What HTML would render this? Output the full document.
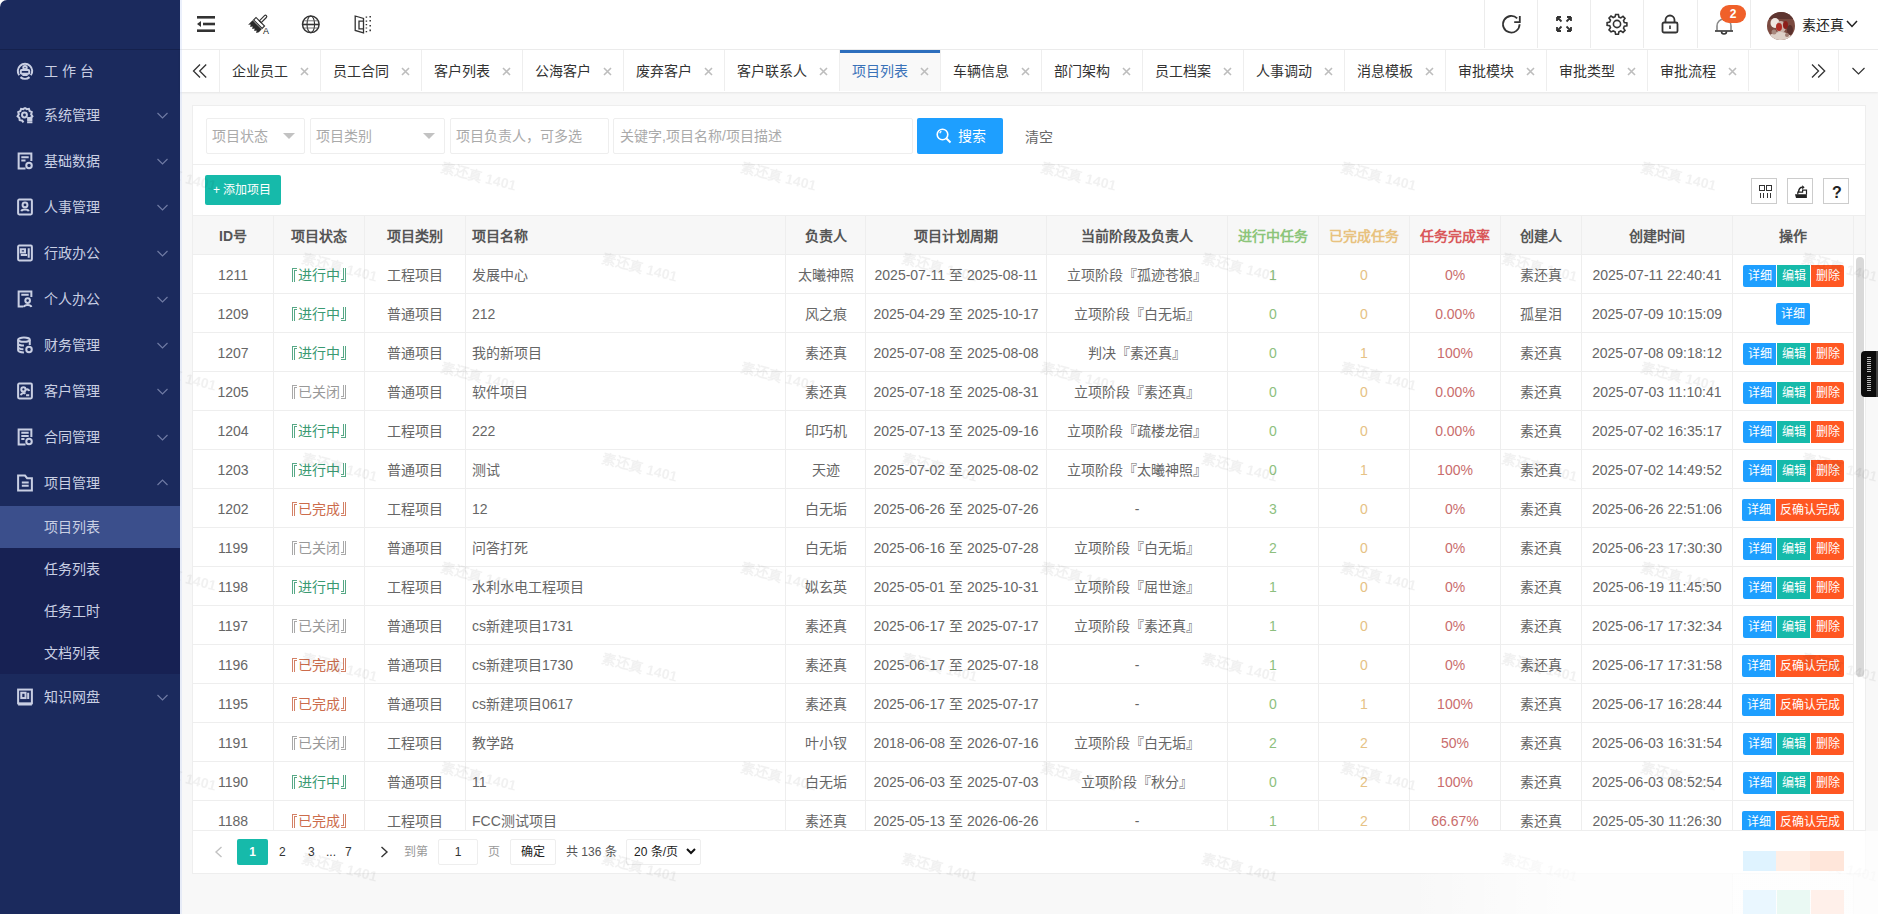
<!DOCTYPE html><html lang="zh-CN"><head><meta charset="utf-8"><style>
*{box-sizing:border-box;margin:0;padding:0}
html,body{width:1878px;height:914px;overflow:hidden}
body{position:relative;font-family:"Liberation Sans",sans-serif;font-size:14px;color:#333;background:#f8f8f8}
.a{position:absolute}
.nw{white-space:nowrap}
.side{left:0;top:0;width:180px;height:914px;background:#1b2a5d}
.mi{position:absolute;left:0;width:180px;color:#c9cfe3;font-size:14px;white-space:nowrap}
.mi .t{position:absolute;left:44px;top:0;line-height:inherit}
.mi svg{position:absolute}
.hdr{left:180px;top:0;width:1698px;height:50px;background:#fff;border-bottom:1px solid #ececec}
.tabs{left:180px;top:50px;width:1698px;height:42px;background:#fff;box-shadow:0 1px 2px rgba(0,0,0,.08)}
.tab{position:absolute;top:0;height:41px;border-right:1px solid #eee;color:#333;font-size:14px;line-height:43px;white-space:nowrap}
.tab .x{position:absolute;top:0;color:#aaa}
.card{left:192px;top:105px;width:1674px;height:769px;background:#fff;border:1px solid #eee}
.cell{position:absolute;text-align:center;white-space:nowrap;color:#666;font-size:14px;overflow:hidden}
.vl{position:absolute;width:1px;background:#eee}
.hl{position:absolute;height:1px;background:#eee}
.btns{position:absolute;height:22px;font-size:12px;line-height:22px;color:#fff;white-space:nowrap;border-radius:2px;overflow:hidden}
.btns span{position:absolute;top:0;height:22px;text-align:center}
.bl,.br{display:inline-block;width:5px;height:14px;vertical-align:-2px;border-color:currentColor;opacity:.85}.bl{border-left:3px double;border-top:3px double;margin-right:1px}.br{border-right:3px double;border-bottom:3px double;margin-left:1px}
.b1{background:#1e9fff}.b2{background:#16baaa}.b3{background:#ff5722}
</style></head><body><div class="a" style="left:0;top:0;width:12px;height:12px;background:#fff"></div>
<div class="a side" style="border-top-left-radius:7px">
<div class="a" style="left:0;top:49px;width:180px;height:1px;background:#15214d"></div>
<div class="mi" style="top:50px;height:42px;line-height:42px">
<svg style="left:16px;top:12px" width="18" height="18" viewBox="0 0 17 17" fill="none" stroke="#c9cfe3" stroke-width="1.9"><path d="M3 12.5A6.8 6.8 0 1 1 14 12.5"/><path d="M4.2 14.3A6.8 6.8 0 0 0 12.8 14.3"/><circle cx="8.5" cy="5.3" r="1.6"/><rect x="4.5" y="7.6" width="8" height="3.4" rx=".8"/><path d="M6 12.3h5"/></svg>
<span class="t">工 作 台</span>
</div>
<div class="mi" style="top:92px;height:46px;line-height:46px">
<svg style="left:16px;top:14px" width="18" height="18" viewBox="0 0 17 17" fill="none" stroke="#c9cfe3" stroke-width="1.9"><path d="M8.5 1.5l1.5 1.6 2.2-.4.7 2.1 2 1-.6 2.1 1.2 1.8-1.6 1.5M8.5 1.5 7 3.1 4.8 2.7 4.1 4.8l-2 1 .6 2.1-1.2 1.8 1.6 1.5.4 2.2 2.2.3 1.4 1.7"/><circle cx="8" cy="8.5" r="2.3"/><path d="M10.5 11.3h5M10.5 13.3h5M10.5 15.3h5"/></svg>
<span class="t">系统管理</span>
<svg style="left:157px;top:20px" width="11" height="7" viewBox="0 0 11 7" fill="none" stroke="#6f7aa3" stroke-width="1.2"><path d="M.5 1L5.5 6 10.5 1"/></svg>
</div>
<div class="mi" style="top:138px;height:46px;line-height:46px">
<svg style="left:16px;top:14px" width="18" height="18" viewBox="0 0 17 17" fill="none" stroke="#c9cfe3" stroke-width="1.9"><path d="M9 15.5H2.5V1.5h12v7"/><path d="M5 5h7M5 8h4"/><circle cx="12.3" cy="12.8" r="2.6"/></svg>
<span class="t">基础数据</span>
<svg style="left:157px;top:20px" width="11" height="7" viewBox="0 0 11 7" fill="none" stroke="#6f7aa3" stroke-width="1.2"><path d="M.5 1L5.5 6 10.5 1"/></svg>
</div>
<div class="mi" style="top:184px;height:46px;line-height:46px">
<svg style="left:16px;top:14px" width="18" height="18" viewBox="0 0 17 17" fill="none" stroke="#c9cfe3" stroke-width="1.9"><rect x="2" y="1.5" width="13" height="14" rx="1"/><circle cx="8.5" cy="6.5" r="2.3"/><path d="M5 12.5c.8-2.2 6.2-2.2 7 0"/></svg>
<span class="t">人事管理</span>
<svg style="left:157px;top:20px" width="11" height="7" viewBox="0 0 11 7" fill="none" stroke="#6f7aa3" stroke-width="1.2"><path d="M.5 1L5.5 6 10.5 1"/></svg>
</div>
<div class="mi" style="top:230px;height:46px;line-height:46px">
<svg style="left:16px;top:14px" width="18" height="18" viewBox="0 0 17 17" fill="none" stroke="#c9cfe3" stroke-width="1.9"><rect x="2" y="1.5" width="13" height="14" rx="1"/><rect x="4.5" y="5" width="4" height="3"/><path d="M4.5 10.5h6M12 4v9"/></svg>
<span class="t">行政办公</span>
<svg style="left:157px;top:20px" width="11" height="7" viewBox="0 0 11 7" fill="none" stroke="#6f7aa3" stroke-width="1.2"><path d="M.5 1L5.5 6 10.5 1"/></svg>
</div>
<div class="mi" style="top:276px;height:46px;line-height:46px">
<svg style="left:16px;top:14px" width="18" height="18" viewBox="0 0 17 17" fill="none" stroke="#c9cfe3" stroke-width="1.9"><path d="M7 15.5H2.5V1.5h12v5"/><path d="M5 4.5h7"/><circle cx="11" cy="10" r="2.2"/><path d="M7.5 16c.6-2.5 6.4-2.5 7 0"/></svg>
<span class="t">个人办公</span>
<svg style="left:157px;top:20px" width="11" height="7" viewBox="0 0 11 7" fill="none" stroke="#6f7aa3" stroke-width="1.2"><path d="M.5 1L5.5 6 10.5 1"/></svg>
</div>
<div class="mi" style="top:322px;height:46px;line-height:46px">
<svg style="left:16px;top:14px" width="18" height="18" viewBox="0 0 17 17" fill="none" stroke="#c9cfe3" stroke-width="1.9"><ellipse cx="7.5" cy="3.5" rx="5.5" ry="2"/><path d="M2 3.5v10c0 1.1 2.5 2 5.5 2M13 3.5v5M2 7c0 1.1 2.5 2 5.5 2M2 10.5c0 1.1 2.5 2 5 2"/><circle cx="12.3" cy="12.8" r="2.6"/></svg>
<span class="t">财务管理</span>
<svg style="left:157px;top:20px" width="11" height="7" viewBox="0 0 11 7" fill="none" stroke="#6f7aa3" stroke-width="1.2"><path d="M.5 1L5.5 6 10.5 1"/></svg>
</div>
<div class="mi" style="top:368px;height:46px;line-height:46px">
<svg style="left:16px;top:14px" width="18" height="18" viewBox="0 0 17 17" fill="none" stroke="#c9cfe3" stroke-width="1.9"><rect x="2" y="1.5" width="13" height="14" rx="1"/><circle cx="7" cy="7" r="2"/><path d="M4.5 12.5c.5-2 3-2.5 4.5-1.5M9.5 7.5c1-1 2.5-.5 3 1M9.5 12.5h3"/></svg>
<span class="t">客户管理</span>
<svg style="left:157px;top:20px" width="11" height="7" viewBox="0 0 11 7" fill="none" stroke="#6f7aa3" stroke-width="1.2"><path d="M.5 1L5.5 6 10.5 1"/></svg>
</div>
<div class="mi" style="top:414px;height:46px;line-height:46px">
<svg style="left:16px;top:14px" width="18" height="18" viewBox="0 0 17 17" fill="none" stroke="#c9cfe3" stroke-width="1.9"><path d="M9 15.5H2.5V1.5h12v7"/><path d="M5 4.5h7M5 7.5h7M5 10.5h3"/><circle cx="12.3" cy="12.8" r="2.6"/></svg>
<span class="t">合同管理</span>
<svg style="left:157px;top:20px" width="11" height="7" viewBox="0 0 11 7" fill="none" stroke="#6f7aa3" stroke-width="1.2"><path d="M.5 1L5.5 6 10.5 1"/></svg>
</div>
<div class="mi" style="top:460px;height:46px;line-height:46px">
<svg style="left:16px;top:14px" width="18" height="18" viewBox="0 0 17 17" fill="none" stroke="#c9cfe3" stroke-width="1.9"><path d="M2 1.5h6.5l2 2.5h4.5v11.5H2z"/><path d="M5.5 8h6.5M5.5 11h6.5"/></svg>
<span class="t">项目管理</span>
<svg style="left:157px;top:19px" width="11" height="7" viewBox="0 0 11 7" fill="none" stroke="#6f7aa3" stroke-width="1.2"><path d="M.5 6L5.5 1 10.5 6"/></svg>
</div>
<div class="a" style="left:0;top:506px;width:180px;height:168px;background:#172153"></div>
<div class="a" style="left:0;top:506px;width:180px;height:42px;background:#3b4f8c"></div>
<div class="mi" style="top:506px;height:42px;line-height:42px"><span class="t">项目列表</span></div>
<div class="mi" style="top:548px;height:42px;line-height:42px"><span class="t">任务列表</span></div>
<div class="mi" style="top:590px;height:42px;line-height:42px"><span class="t">任务工时</span></div>
<div class="mi" style="top:632px;height:42px;line-height:42px"><span class="t">文档列表</span></div>
<div class="mi" style="top:674px;height:46px;line-height:46px"><svg style="left:16px;top:14px" width="18" height="18" viewBox="0 0 17 17" fill="none" stroke="#c9cfe3" stroke-width="1.9"><rect x="2" y="1.5" width="13" height="13" rx="0"/><rect x="5" y="4.5" width="4" height="5"/><path d="M11.5 4.5v6M2 15.5h13"/></svg><span class="t">知识网盘</span><svg style="left:157px;top:20px" width="11" height="7" viewBox="0 0 11 7" fill="none" stroke="#6f7aa3" stroke-width="1.2"><path d="M.5 1L5.5 6 10.5 1"/></svg></div>
</div>
<div class="a hdr"></div>

<svg class="a" style="left:196px;top:15px" width="20" height="18" viewBox="0 0 20 18" fill="#333"><rect x="1" y="1" width="18" height="2.6"/><rect x="7" y="7.7" width="12" height="2.6"/><rect x="1" y="14.4" width="18" height="2.6"/><path d="M1 9l4-3v6z"/></svg>
<svg class="a" style="left:244px;top:10px" width="30" height="28" viewBox="0 0 30 28"><g transform="translate(13.3 14.7) rotate(45)"><path d="M-1.3 -4.2V-11.5a1.3 1.3 0 0 1 2.6 0V-4.2z" fill="none" stroke="#333" stroke-width="1.2"/><rect x="-6" y="-4.2" width="12" height="3.4" fill="none" stroke="#333" stroke-width="1.2"/><path d="M-6.4 0.2H6.4V4.2L5 6.6 3.6 4.6 2.2 6.6 0.8 4.6-0.6 6.6-2 4.6-3.4 6.6-4.8 4.6-6.4 6.6z" fill="#2a2a2a"/></g><text x="19" y="24.3" font-family="Liberation Sans" font-size="9" fill="#222">A</text></svg>
<svg class="a" style="left:301px;top:15px" width="19" height="19" viewBox="0 0 19 19" fill="none" stroke="#333"><circle cx="9.8" cy="9.3" r="8.3" stroke-width="1.5"/><ellipse cx="9.8" cy="9.3" rx="3.8" ry="8.3" stroke-width="1.1"/><path d="M1.5 9.5h16.6" stroke-width="1.6"/><path d="M3.2 5.8h13.2M3.2 13h13.2" stroke-width=".9" stroke="#666"/></svg>
<svg class="a" style="left:354px;top:15px" width="19" height="19" viewBox="0 0 19 19" fill="none" stroke="#333"><path d="M1.2 1L9.5 3.4V17.8L1.2 15.5Z" stroke-width="1.3"/><path d="M9.5 6.2H5V13.8H9.5" stroke-width="1.3"/><path d="M12.4 1.6v1.2M12.4 5.6v1.2M12.4 9v1.2M12.4 12.4v1.2M12.4 16v1.2M16.2 1v1.6M16.2 5v1.6M16.2 10v1.6M16.2 14.6v1.6" stroke-width="1.5"/></svg>

<div class="a" style="left:1484px;top:0;width:1px;height:48px;background:#ececec"></div>
<div class="a" style="left:1537px;top:0;width:1px;height:48px;background:#ececec"></div>
<div class="a" style="left:1590px;top:0;width:1px;height:48px;background:#ececec"></div>
<div class="a" style="left:1643px;top:0;width:1px;height:48px;background:#ececec"></div>
<div class="a" style="left:1697px;top:0;width:1px;height:48px;background:#ececec"></div>
<div class="a" style="left:1750px;top:0;width:1px;height:48px;background:#ececec"></div>

<svg class="a" style="left:1500px;top:13px" width="23" height="22" viewBox="0 0 23 22" fill="none" stroke="#333" stroke-width="1.8"><path d="M19.6 11.3A8.3 8.3 0 1 1 17.2 5.4"/><path d="M19.8 3v6.2h-5.6"/></svg>
<svg class="a" style="left:1555px;top:15px" width="18" height="18" viewBox="0 0 18 18" fill="none" stroke="#333" stroke-width="1.8"><path d="M2 2l4.5 4.5M2 2v4M2 2h4M16 2l-4.5 4.5M16 2v4M16 2h-4M2 16l4.5-4.5M2 16v-4M2 16h4M16 16l-4.5-4.5M16 16v-4M16 16h-4"/></svg>
<svg class="a" style="left:1606px;top:13px" width="22" height="22" viewBox="0 0 22 22" fill="none" stroke="#333" stroke-width="1.6"><path d="M9.6 1.5h2.8l.5 2.6 1.9.8 2.2-1.5 2 2-1.5 2.2.8 1.9 2.6.5v2.8l-2.6.5-.8 1.9 1.5 2.2-2 2-2.2-1.5-1.9.8-.5 2.6H9.6l-.5-2.6-1.9-.8L5 18.9l-2-2 1.5-2.2-.8-1.9-2.6-.5V9.6l2.6-.5.8-1.9L3 5 5 3l2.2 1.5 1.9-.8z"/><circle cx="11" cy="11" r="3.6"/></svg>
<svg class="a" style="left:1661px;top:14px" width="18" height="20" viewBox="0 0 18 20" fill="none" stroke="#333" stroke-width="1.8"><rect x="1.5" y="8.5" width="15" height="10" rx="1.5"/><path d="M4.5 8.5V6a4.5 4.5 0 0 1 9 0v2.5"/><path d="M9 11.5v3.5" stroke-width="1.6"/></svg>
<svg class="a" style="left:1714px;top:17px" width="20" height="18" viewBox="0 0 20 18" fill="none" stroke-width="1.6"><path d="M3 13.5V9a7 7 0 0 1 14 0v4.5" stroke="#888"/><path d="M1 14h18" stroke="#333"/><path d="M7.5 14.5a2.5 2.5 0 0 0 5 0" stroke="#333"/></svg>
<div class="a" style="left:1720px;top:5px;width:26px;height:18px;border-radius:9px;background:#f0602a;color:#fff;font-size:12px;font-weight:bold;line-height:18px;text-align:center">2</div>
<svg class="a" style="left:1767px;top:12px" width="28" height="28" viewBox="0 0 28 28"><defs><clipPath id="av"><circle cx="14" cy="14" r="14"/></clipPath></defs><g clip-path="url(#av)"><rect width="28" height="28" fill="#7b4a40"/><rect x="0" y="0" width="28" height="7" fill="#5e3530"/><ellipse cx="8" cy="11" rx="4.5" ry="5" fill="#efe6e0"/><ellipse cx="14" cy="15" rx="5" ry="6" fill="#c9b3aa"/><ellipse cx="12" cy="15" rx="3" ry="4" fill="#b02c24"/><ellipse cx="18.5" cy="13" rx="2.5" ry="4" fill="#8c1f1a"/><ellipse cx="13" cy="25" rx="11" ry="5" fill="#ddd0c8"/><ellipse cx="23" cy="18" rx="3" ry="5" fill="#5a302c"/><circle cx="7" cy="20" r="2.5" fill="#a8887e"/><circle cx="20" cy="23" r="2" fill="#9d7a70"/></g></svg>
<div class="a nw" style="left:1802px;top:16px;font-size:14px;line-height:18px;color:#222">素还真</div>
<svg class="a" style="left:1846px;top:20px" width="12" height="8" viewBox="0 0 12 8" fill="none" stroke="#222" stroke-width="1.5"><path d="M1 1l5 5.5L11 1"/></svg>

<div class="a tabs"></div>
<div class="a" style="left:180px;top:50px;width:40px;height:42px;border-right:1px solid #eee"></div>
<svg class="a" style="left:192px;top:63px" width="16" height="16" viewBox="0 0 16 16" fill="none" stroke="#333" stroke-width="1.3"><path d="M8 1.5L1.5 8 8 14.5M14.2 1.5L7.7 8l6.5 6.5"/></svg>
<div class="a tab" style="left:220px;top:50px;width:101px;">
<span class="a" style="left:12px;top:0;color:#333">企业员工</span>
<svg class="a" style="left:80px;top:17px" width="9" height="9" viewBox="0 0 9 9" stroke="#bdbdbd" stroke-width="1.6"><path d="M1 1l7 7M8 1L1 8"/></svg>
</div>
<div class="a tab" style="left:321px;top:50px;width:101px;">
<span class="a" style="left:12px;top:0;color:#333">员工合同</span>
<svg class="a" style="left:80px;top:17px" width="9" height="9" viewBox="0 0 9 9" stroke="#bdbdbd" stroke-width="1.6"><path d="M1 1l7 7M8 1L1 8"/></svg>
</div>
<div class="a tab" style="left:422px;top:50px;width:101px;">
<span class="a" style="left:12px;top:0;color:#333">客户列表</span>
<svg class="a" style="left:80px;top:17px" width="9" height="9" viewBox="0 0 9 9" stroke="#bdbdbd" stroke-width="1.6"><path d="M1 1l7 7M8 1L1 8"/></svg>
</div>
<div class="a tab" style="left:523px;top:50px;width:101px;">
<span class="a" style="left:12px;top:0;color:#333">公海客户</span>
<svg class="a" style="left:80px;top:17px" width="9" height="9" viewBox="0 0 9 9" stroke="#bdbdbd" stroke-width="1.6"><path d="M1 1l7 7M8 1L1 8"/></svg>
</div>
<div class="a tab" style="left:624px;top:50px;width:101px;">
<span class="a" style="left:12px;top:0;color:#333">废弃客户</span>
<svg class="a" style="left:80px;top:17px" width="9" height="9" viewBox="0 0 9 9" stroke="#bdbdbd" stroke-width="1.6"><path d="M1 1l7 7M8 1L1 8"/></svg>
</div>
<div class="a tab" style="left:725px;top:50px;width:115px;">
<span class="a" style="left:12px;top:0;color:#333">客户联系人</span>
<svg class="a" style="left:94px;top:17px" width="9" height="9" viewBox="0 0 9 9" stroke="#bdbdbd" stroke-width="1.6"><path d="M1 1l7 7M8 1L1 8"/></svg>
</div>
<div class="a tab" style="left:840px;top:50px;width:101px;background:#f9f9f9;">
<div class="a" style="left:0;top:0;width:100px;height:3px;background:#2d6ebd"></div>
<span class="a" style="left:12px;top:0;color:#3a72b8">项目列表</span>
<svg class="a" style="left:80px;top:17px" width="9" height="9" viewBox="0 0 9 9" stroke="#bdbdbd" stroke-width="1.6"><path d="M1 1l7 7M8 1L1 8"/></svg>
</div>
<div class="a tab" style="left:941px;top:50px;width:101px;">
<span class="a" style="left:12px;top:0;color:#333">车辆信息</span>
<svg class="a" style="left:80px;top:17px" width="9" height="9" viewBox="0 0 9 9" stroke="#bdbdbd" stroke-width="1.6"><path d="M1 1l7 7M8 1L1 8"/></svg>
</div>
<div class="a tab" style="left:1042px;top:50px;width:101px;">
<span class="a" style="left:12px;top:0;color:#333">部门架构</span>
<svg class="a" style="left:80px;top:17px" width="9" height="9" viewBox="0 0 9 9" stroke="#bdbdbd" stroke-width="1.6"><path d="M1 1l7 7M8 1L1 8"/></svg>
</div>
<div class="a tab" style="left:1143px;top:50px;width:101px;">
<span class="a" style="left:12px;top:0;color:#333">员工档案</span>
<svg class="a" style="left:80px;top:17px" width="9" height="9" viewBox="0 0 9 9" stroke="#bdbdbd" stroke-width="1.6"><path d="M1 1l7 7M8 1L1 8"/></svg>
</div>
<div class="a tab" style="left:1244px;top:50px;width:101px;">
<span class="a" style="left:12px;top:0;color:#333">人事调动</span>
<svg class="a" style="left:80px;top:17px" width="9" height="9" viewBox="0 0 9 9" stroke="#bdbdbd" stroke-width="1.6"><path d="M1 1l7 7M8 1L1 8"/></svg>
</div>
<div class="a tab" style="left:1345px;top:50px;width:101px;">
<span class="a" style="left:12px;top:0;color:#333">消息模板</span>
<svg class="a" style="left:80px;top:17px" width="9" height="9" viewBox="0 0 9 9" stroke="#bdbdbd" stroke-width="1.6"><path d="M1 1l7 7M8 1L1 8"/></svg>
</div>
<div class="a tab" style="left:1446px;top:50px;width:101px;">
<span class="a" style="left:12px;top:0;color:#333">审批模块</span>
<svg class="a" style="left:80px;top:17px" width="9" height="9" viewBox="0 0 9 9" stroke="#bdbdbd" stroke-width="1.6"><path d="M1 1l7 7M8 1L1 8"/></svg>
</div>
<div class="a tab" style="left:1547px;top:50px;width:101px;">
<span class="a" style="left:12px;top:0;color:#333">审批类型</span>
<svg class="a" style="left:80px;top:17px" width="9" height="9" viewBox="0 0 9 9" stroke="#bdbdbd" stroke-width="1.6"><path d="M1 1l7 7M8 1L1 8"/></svg>
</div>
<div class="a tab" style="left:1648px;top:50px;width:101px;">
<span class="a" style="left:12px;top:0;color:#333">审批流程</span>
<svg class="a" style="left:80px;top:17px" width="9" height="9" viewBox="0 0 9 9" stroke="#bdbdbd" stroke-width="1.6"><path d="M1 1l7 7M8 1L1 8"/></svg>
</div>
<div class="a" style="left:1798px;top:50px;width:1px;height:41px;background:#eee"></div>
<div class="a" style="left:1838px;top:50px;width:1px;height:41px;background:#eee"></div>
<svg class="a" style="left:1811px;top:63px" width="16" height="16" viewBox="0 0 16 16" fill="none" stroke="#333" stroke-width="1.3"><path d="M1 1.5l6.5 6.5L1 14.5M7.2 1.5l6.5 6.5-6.5 6.5"/></svg>
<svg class="a" style="left:1851px;top:67px" width="15" height="8" viewBox="0 0 15 8" fill="none" stroke="#333" stroke-width="1.2"><path d="M1.5 1l6 6 6-6"/></svg>
<div class="a card"></div>
<div class="a" style="left:206px;top:118px;width:99px;height:36px;border:1px solid #eee;background:#fff;border-radius:2px;"></div>
<div class="a" style="left:310px;top:118px;width:135px;height:36px;border:1px solid #eee;background:#fff;border-radius:2px;"></div>
<div class="a" style="left:450px;top:118px;width:159px;height:36px;border:1px solid #eee;background:#fff;border-radius:2px;"></div>
<div class="a" style="left:613px;top:118px;width:300px;height:36px;border:1px solid #eee;background:#fff;border-radius:2px;"></div>
<div class="a nw" style="left:212px;top:127px;color:#aaa;font-size:14px;line-height:18px">项目状态</div>
<div class="a nw" style="left:316px;top:127px;color:#aaa;font-size:14px;line-height:18px">项目类别</div>
<div class="a nw" style="left:456px;top:127px;color:#aaa;font-size:14px;line-height:18px">项目负责人，可多选</div>
<div class="a nw" style="left:620px;top:127px;color:#aaa;font-size:14px;line-height:18px">关键字,项目名称/项目描述</div>
<svg class="a" style="left:283px;top:133px" width="12" height="6" viewBox="0 0 12 6"><path d="M0 0h12L6 6z" fill="#c2c2c2"/></svg>
<svg class="a" style="left:423px;top:133px" width="12" height="6" viewBox="0 0 12 6"><path d="M0 0h12L6 6z" fill="#c2c2c2"/></svg>
<div class="a" style="left:917px;top:118px;width:86px;height:36px;background:#1e9fff;border-radius:2px"></div>
<svg class="a" style="left:936px;top:128px" width="16" height="16" viewBox="0 0 16 16" fill="none" stroke="#fff" stroke-width="1.6"><circle cx="6.5" cy="6.5" r="5.3"/><path d="M10.5 10.5l4 4" stroke-width="2"/><path d="M3.8 5.2a3 3 0 0 1 1.6-1.8" stroke-width="1.2"/></svg>
<div class="a nw" style="left:958px;top:127px;color:#fff;font-size:14px;line-height:18px">搜索</div>
<div class="a nw" style="left:1025px;top:128px;color:#666;font-size:14px;line-height:18px">清空</div>
<div class="hl" style="left:193px;top:164px;width:1672px"></div>
<div class="a" style="left:205px;top:175px;width:76px;height:30px;background:#16baaa;border-radius:2px"></div>
<div class="a nw" style="left:213px;top:182px;color:#fff;font-size:12px;line-height:16px">+ 添加项目</div>
<div class="a" style="left:1751px;top:178px;width:26px;height:26px;border:1px solid #ccc"></div>
<div class="a" style="left:1787px;top:178px;width:26px;height:26px;border:1px solid #ccc"></div>
<div class="a" style="left:1823px;top:178px;width:26px;height:26px;border:1px solid #ccc"></div>
<svg class="a" style="left:1758px;top:184px" width="16" height="16" viewBox="0 0 16 16" fill="none" stroke="#333" stroke-width="1"><rect x="1.5" y="1.5" width="5" height="5"/><rect x="8.5" y="1.5" width="5" height="5"/><path d="M2.5 9v5M5.5 9v5M9.5 9v5M12.5 9v5"/></svg>
<svg class="a" style="left:1788px;top:180px" width="24" height="22" viewBox="0 0 24 22"><path d="M7 14.2H18.9V17.9H8z" fill="#222"/><path d="M9.8 14.5V12.2H14.6V10.2H18.5V14.5" fill="none" stroke="#222" stroke-width="1.2"/><path d="M10.6 12.2C10.7 9.2 12.3 7.3 14.6 7.3" fill="none" stroke="#222" stroke-width="1.5"/><path d="M14.2 5.2L16.6 7.3 14.2 9.4z" fill="#222"/></svg>
<div class="a nw" style="left:1832px;top:184px;font-size:16px;font-weight:bold;line-height:18px;color:#222">?</div>
<div class="a" style="left:193px;top:215px;width:1672px;height:39px;background:#f7f7f7"></div>
<div class="hl" style="left:193px;top:215px;width:1672px"></div>
<div class="hl" style="left:193px;top:254px;width:1672px"></div>
<div class="cell" style="left:193px;top:217px;width:80px;height:37px;line-height:39px;text-align:center;font-weight:bold;color:#555">ID号</div>
<div class="cell" style="left:274px;top:217px;width:90px;height:37px;line-height:39px;text-align:center;font-weight:bold;color:#555">项目状态</div>
<div class="cell" style="left:365px;top:217px;width:100px;height:37px;line-height:39px;text-align:center;font-weight:bold;color:#555">项目类别</div>
<div class="cell" style="left:466px;top:217px;width:319px;height:37px;line-height:39px;text-align:left;padding-left:6px;font-weight:bold;color:#555">项目名称</div>
<div class="cell" style="left:786px;top:217px;width:79px;height:37px;line-height:39px;text-align:center;font-weight:bold;color:#555">负责人</div>
<div class="cell" style="left:866px;top:217px;width:180px;height:37px;line-height:39px;text-align:center;font-weight:bold;color:#555">项目计划周期</div>
<div class="cell" style="left:1047px;top:217px;width:180px;height:37px;line-height:39px;text-align:center;font-weight:bold;color:#555">当前阶段及负责人</div>
<div class="cell" style="left:1228px;top:217px;width:90px;height:37px;line-height:39px;text-align:center;font-weight:bold;color:#8cc57a">进行中任务</div>
<div class="cell" style="left:1319px;top:217px;width:90px;height:37px;line-height:39px;text-align:center;font-weight:bold;color:#e8c27f">已完成任务</div>
<div class="cell" style="left:1410px;top:217px;width:90px;height:37px;line-height:39px;text-align:center;font-weight:bold;color:#d9585a">任务完成率</div>
<div class="cell" style="left:1501px;top:217px;width:80px;height:37px;line-height:39px;text-align:center;font-weight:bold;color:#555">创建人</div>
<div class="cell" style="left:1582px;top:217px;width:150px;height:37px;line-height:39px;text-align:center;font-weight:bold;color:#555">创建时间</div>
<div class="cell" style="left:1733px;top:217px;width:120px;height:37px;line-height:39px;text-align:center;font-weight:bold;color:#555">操作</div>
<div class="a" style="left:193px;top:255px;width:1661px;height:575px;overflow:hidden">
<div class="cell" style="left:0px;top:1px;width:80px;height:37px;line-height:38px;text-align:center;color:#666">1211</div>
<div class="cell" style="left:81px;top:1px;width:90px;height:37px;line-height:38px;text-align:center;color:#3a9a72"><i class="bl"></i>进行中<i class="br"></i></div>
<div class="cell" style="left:172px;top:1px;width:100px;height:37px;line-height:38px;text-align:center;color:#666">工程项目</div>
<div class="cell" style="left:273px;top:1px;width:319px;height:37px;line-height:38px;text-align:left;padding-left:6px;color:#666">发展中心</div>
<div class="cell" style="left:593px;top:1px;width:79px;height:37px;line-height:38px;text-align:center;color:#666">太曦神照</div>
<div class="cell" style="left:673px;top:1px;width:180px;height:37px;line-height:38px;text-align:center;color:#666">2025-07-11 至 2025-08-11</div>
<div class="cell" style="left:854px;top:1px;width:180px;height:37px;line-height:38px;text-align:center;color:#666">立项阶段『孤迹苍狼』</div>
<div class="cell" style="left:1035px;top:1px;width:90px;height:37px;line-height:38px;text-align:center;color:#8dbf7e">1</div>
<div class="cell" style="left:1126px;top:1px;width:90px;height:37px;line-height:38px;text-align:center;color:#e6c285">0</div>
<div class="cell" style="left:1217px;top:1px;width:90px;height:37px;line-height:38px;text-align:center;color:#c96d6d">0%</div>
<div class="cell" style="left:1308px;top:1px;width:80px;height:37px;line-height:38px;text-align:center;color:#666">素还真</div>
<div class="cell" style="left:1389px;top:1px;width:150px;height:37px;line-height:38px;text-align:center;color:#666">2025-07-11 22:40:41</div>
<div class="btns" style="left:1550px;top:10px;width:101px"><span class="b1" style="left:0;width:33px">详细</span><span class="b2" style="left:34px;width:33px">编辑</span><span class="b3" style="left:68px;width:33px">删除</span></div>
<div class="hl" style="left:0;top:38px;width:1661px"></div>
<div class="cell" style="left:0px;top:40px;width:80px;height:37px;line-height:38px;text-align:center;color:#666">1209</div>
<div class="cell" style="left:81px;top:40px;width:90px;height:37px;line-height:38px;text-align:center;color:#3a9a72"><i class="bl"></i>进行中<i class="br"></i></div>
<div class="cell" style="left:172px;top:40px;width:100px;height:37px;line-height:38px;text-align:center;color:#666">普通项目</div>
<div class="cell" style="left:273px;top:40px;width:319px;height:37px;line-height:38px;text-align:left;padding-left:6px;color:#666">212</div>
<div class="cell" style="left:593px;top:40px;width:79px;height:37px;line-height:38px;text-align:center;color:#666">风之痕</div>
<div class="cell" style="left:673px;top:40px;width:180px;height:37px;line-height:38px;text-align:center;color:#666">2025-04-29 至 2025-10-17</div>
<div class="cell" style="left:854px;top:40px;width:180px;height:37px;line-height:38px;text-align:center;color:#666">立项阶段『白无垢』</div>
<div class="cell" style="left:1035px;top:40px;width:90px;height:37px;line-height:38px;text-align:center;color:#8dbf7e">0</div>
<div class="cell" style="left:1126px;top:40px;width:90px;height:37px;line-height:38px;text-align:center;color:#e6c285">0</div>
<div class="cell" style="left:1217px;top:40px;width:90px;height:37px;line-height:38px;text-align:center;color:#c96d6d">0.00%</div>
<div class="cell" style="left:1308px;top:40px;width:80px;height:37px;line-height:38px;text-align:center;color:#666">孤星泪</div>
<div class="cell" style="left:1389px;top:40px;width:150px;height:37px;line-height:38px;text-align:center;color:#666">2025-07-09 10:15:09</div>
<div class="btns" style="left:1583px;top:48px;width:34px"><span class="b1" style="left:0;width:34px">详细</span></div>
<div class="hl" style="left:0;top:77px;width:1661px"></div>
<div class="cell" style="left:0px;top:79px;width:80px;height:37px;line-height:38px;text-align:center;color:#666">1207</div>
<div class="cell" style="left:81px;top:79px;width:90px;height:37px;line-height:38px;text-align:center;color:#3a9a72"><i class="bl"></i>进行中<i class="br"></i></div>
<div class="cell" style="left:172px;top:79px;width:100px;height:37px;line-height:38px;text-align:center;color:#666">普通项目</div>
<div class="cell" style="left:273px;top:79px;width:319px;height:37px;line-height:38px;text-align:left;padding-left:6px;color:#666">我的新项目</div>
<div class="cell" style="left:593px;top:79px;width:79px;height:37px;line-height:38px;text-align:center;color:#666">素还真</div>
<div class="cell" style="left:673px;top:79px;width:180px;height:37px;line-height:38px;text-align:center;color:#666">2025-07-08 至 2025-08-08</div>
<div class="cell" style="left:854px;top:79px;width:180px;height:37px;line-height:38px;text-align:center;color:#666">判决『素还真』</div>
<div class="cell" style="left:1035px;top:79px;width:90px;height:37px;line-height:38px;text-align:center;color:#8dbf7e">0</div>
<div class="cell" style="left:1126px;top:79px;width:90px;height:37px;line-height:38px;text-align:center;color:#e6c285">1</div>
<div class="cell" style="left:1217px;top:79px;width:90px;height:37px;line-height:38px;text-align:center;color:#c96d6d">100%</div>
<div class="cell" style="left:1308px;top:79px;width:80px;height:37px;line-height:38px;text-align:center;color:#666">素还真</div>
<div class="cell" style="left:1389px;top:79px;width:150px;height:37px;line-height:38px;text-align:center;color:#666">2025-07-08 09:18:12</div>
<div class="btns" style="left:1550px;top:88px;width:101px"><span class="b1" style="left:0;width:33px">详细</span><span class="b2" style="left:34px;width:33px">编辑</span><span class="b3" style="left:68px;width:33px">删除</span></div>
<div class="hl" style="left:0;top:116px;width:1661px"></div>
<div class="cell" style="left:0px;top:118px;width:80px;height:37px;line-height:38px;text-align:center;color:#666">1205</div>
<div class="cell" style="left:81px;top:118px;width:90px;height:37px;line-height:38px;text-align:center;color:#999"><i class="bl"></i>已关闭<i class="br"></i></div>
<div class="cell" style="left:172px;top:118px;width:100px;height:37px;line-height:38px;text-align:center;color:#666">普通项目</div>
<div class="cell" style="left:273px;top:118px;width:319px;height:37px;line-height:38px;text-align:left;padding-left:6px;color:#666">软件项目</div>
<div class="cell" style="left:593px;top:118px;width:79px;height:37px;line-height:38px;text-align:center;color:#666">素还真</div>
<div class="cell" style="left:673px;top:118px;width:180px;height:37px;line-height:38px;text-align:center;color:#666">2025-07-18 至 2025-08-31</div>
<div class="cell" style="left:854px;top:118px;width:180px;height:37px;line-height:38px;text-align:center;color:#666">立项阶段『素还真』</div>
<div class="cell" style="left:1035px;top:118px;width:90px;height:37px;line-height:38px;text-align:center;color:#8dbf7e">0</div>
<div class="cell" style="left:1126px;top:118px;width:90px;height:37px;line-height:38px;text-align:center;color:#e6c285">0</div>
<div class="cell" style="left:1217px;top:118px;width:90px;height:37px;line-height:38px;text-align:center;color:#c96d6d">0.00%</div>
<div class="cell" style="left:1308px;top:118px;width:80px;height:37px;line-height:38px;text-align:center;color:#666">素还真</div>
<div class="cell" style="left:1389px;top:118px;width:150px;height:37px;line-height:38px;text-align:center;color:#666">2025-07-03 11:10:41</div>
<div class="btns" style="left:1550px;top:127px;width:101px"><span class="b1" style="left:0;width:33px">详细</span><span class="b2" style="left:34px;width:33px">编辑</span><span class="b3" style="left:68px;width:33px">删除</span></div>
<div class="hl" style="left:0;top:155px;width:1661px"></div>
<div class="cell" style="left:0px;top:157px;width:80px;height:37px;line-height:38px;text-align:center;color:#666">1204</div>
<div class="cell" style="left:81px;top:157px;width:90px;height:37px;line-height:38px;text-align:center;color:#3a9a72"><i class="bl"></i>进行中<i class="br"></i></div>
<div class="cell" style="left:172px;top:157px;width:100px;height:37px;line-height:38px;text-align:center;color:#666">工程项目</div>
<div class="cell" style="left:273px;top:157px;width:319px;height:37px;line-height:38px;text-align:left;padding-left:6px;color:#666">222</div>
<div class="cell" style="left:593px;top:157px;width:79px;height:37px;line-height:38px;text-align:center;color:#666">印巧机</div>
<div class="cell" style="left:673px;top:157px;width:180px;height:37px;line-height:38px;text-align:center;color:#666">2025-07-13 至 2025-09-16</div>
<div class="cell" style="left:854px;top:157px;width:180px;height:37px;line-height:38px;text-align:center;color:#666">立项阶段『疏楼龙宿』</div>
<div class="cell" style="left:1035px;top:157px;width:90px;height:37px;line-height:38px;text-align:center;color:#8dbf7e">0</div>
<div class="cell" style="left:1126px;top:157px;width:90px;height:37px;line-height:38px;text-align:center;color:#e6c285">0</div>
<div class="cell" style="left:1217px;top:157px;width:90px;height:37px;line-height:38px;text-align:center;color:#c96d6d">0.00%</div>
<div class="cell" style="left:1308px;top:157px;width:80px;height:37px;line-height:38px;text-align:center;color:#666">素还真</div>
<div class="cell" style="left:1389px;top:157px;width:150px;height:37px;line-height:38px;text-align:center;color:#666">2025-07-02 16:35:17</div>
<div class="btns" style="left:1550px;top:166px;width:101px"><span class="b1" style="left:0;width:33px">详细</span><span class="b2" style="left:34px;width:33px">编辑</span><span class="b3" style="left:68px;width:33px">删除</span></div>
<div class="hl" style="left:0;top:194px;width:1661px"></div>
<div class="cell" style="left:0px;top:196px;width:80px;height:37px;line-height:38px;text-align:center;color:#666">1203</div>
<div class="cell" style="left:81px;top:196px;width:90px;height:37px;line-height:38px;text-align:center;color:#3a9a72"><i class="bl"></i>进行中<i class="br"></i></div>
<div class="cell" style="left:172px;top:196px;width:100px;height:37px;line-height:38px;text-align:center;color:#666">普通项目</div>
<div class="cell" style="left:273px;top:196px;width:319px;height:37px;line-height:38px;text-align:left;padding-left:6px;color:#666">测试</div>
<div class="cell" style="left:593px;top:196px;width:79px;height:37px;line-height:38px;text-align:center;color:#666">天迹</div>
<div class="cell" style="left:673px;top:196px;width:180px;height:37px;line-height:38px;text-align:center;color:#666">2025-07-02 至 2025-08-02</div>
<div class="cell" style="left:854px;top:196px;width:180px;height:37px;line-height:38px;text-align:center;color:#666">立项阶段『太曦神照』</div>
<div class="cell" style="left:1035px;top:196px;width:90px;height:37px;line-height:38px;text-align:center;color:#8dbf7e">0</div>
<div class="cell" style="left:1126px;top:196px;width:90px;height:37px;line-height:38px;text-align:center;color:#e6c285">1</div>
<div class="cell" style="left:1217px;top:196px;width:90px;height:37px;line-height:38px;text-align:center;color:#c96d6d">100%</div>
<div class="cell" style="left:1308px;top:196px;width:80px;height:37px;line-height:38px;text-align:center;color:#666">素还真</div>
<div class="cell" style="left:1389px;top:196px;width:150px;height:37px;line-height:38px;text-align:center;color:#666">2025-07-02 14:49:52</div>
<div class="btns" style="left:1550px;top:205px;width:101px"><span class="b1" style="left:0;width:33px">详细</span><span class="b2" style="left:34px;width:33px">编辑</span><span class="b3" style="left:68px;width:33px">删除</span></div>
<div class="hl" style="left:0;top:233px;width:1661px"></div>
<div class="cell" style="left:0px;top:235px;width:80px;height:37px;line-height:38px;text-align:center;color:#666">1202</div>
<div class="cell" style="left:81px;top:235px;width:90px;height:37px;line-height:38px;text-align:center;color:#cc6c4c"><i class="bl"></i>已完成<i class="br"></i></div>
<div class="cell" style="left:172px;top:235px;width:100px;height:37px;line-height:38px;text-align:center;color:#666">工程项目</div>
<div class="cell" style="left:273px;top:235px;width:319px;height:37px;line-height:38px;text-align:left;padding-left:6px;color:#666">12</div>
<div class="cell" style="left:593px;top:235px;width:79px;height:37px;line-height:38px;text-align:center;color:#666">白无垢</div>
<div class="cell" style="left:673px;top:235px;width:180px;height:37px;line-height:38px;text-align:center;color:#666">2025-06-26 至 2025-07-26</div>
<div class="cell" style="left:854px;top:235px;width:180px;height:37px;line-height:38px;text-align:center;color:#666">-</div>
<div class="cell" style="left:1035px;top:235px;width:90px;height:37px;line-height:38px;text-align:center;color:#8dbf7e">3</div>
<div class="cell" style="left:1126px;top:235px;width:90px;height:37px;line-height:38px;text-align:center;color:#e6c285">0</div>
<div class="cell" style="left:1217px;top:235px;width:90px;height:37px;line-height:38px;text-align:center;color:#c96d6d">0%</div>
<div class="cell" style="left:1308px;top:235px;width:80px;height:37px;line-height:38px;text-align:center;color:#666">素还真</div>
<div class="cell" style="left:1389px;top:235px;width:150px;height:37px;line-height:38px;text-align:center;color:#666">2025-06-26 22:51:06</div>
<div class="btns" style="left:1549px;top:244px;width:102px"><span class="b1" style="left:0;width:33px">详细</span><span class="b3" style="left:34px;width:68px">反确认完成</span></div>
<div class="hl" style="left:0;top:272px;width:1661px"></div>
<div class="cell" style="left:0px;top:274px;width:80px;height:37px;line-height:38px;text-align:center;color:#666">1199</div>
<div class="cell" style="left:81px;top:274px;width:90px;height:37px;line-height:38px;text-align:center;color:#999"><i class="bl"></i>已关闭<i class="br"></i></div>
<div class="cell" style="left:172px;top:274px;width:100px;height:37px;line-height:38px;text-align:center;color:#666">普通项目</div>
<div class="cell" style="left:273px;top:274px;width:319px;height:37px;line-height:38px;text-align:left;padding-left:6px;color:#666">问答打死</div>
<div class="cell" style="left:593px;top:274px;width:79px;height:37px;line-height:38px;text-align:center;color:#666">白无垢</div>
<div class="cell" style="left:673px;top:274px;width:180px;height:37px;line-height:38px;text-align:center;color:#666">2025-06-16 至 2025-07-28</div>
<div class="cell" style="left:854px;top:274px;width:180px;height:37px;line-height:38px;text-align:center;color:#666">立项阶段『白无垢』</div>
<div class="cell" style="left:1035px;top:274px;width:90px;height:37px;line-height:38px;text-align:center;color:#8dbf7e">2</div>
<div class="cell" style="left:1126px;top:274px;width:90px;height:37px;line-height:38px;text-align:center;color:#e6c285">0</div>
<div class="cell" style="left:1217px;top:274px;width:90px;height:37px;line-height:38px;text-align:center;color:#c96d6d">0%</div>
<div class="cell" style="left:1308px;top:274px;width:80px;height:37px;line-height:38px;text-align:center;color:#666">素还真</div>
<div class="cell" style="left:1389px;top:274px;width:150px;height:37px;line-height:38px;text-align:center;color:#666">2025-06-23 17:30:30</div>
<div class="btns" style="left:1550px;top:283px;width:101px"><span class="b1" style="left:0;width:33px">详细</span><span class="b2" style="left:34px;width:33px">编辑</span><span class="b3" style="left:68px;width:33px">删除</span></div>
<div class="hl" style="left:0;top:311px;width:1661px"></div>
<div class="cell" style="left:0px;top:313px;width:80px;height:37px;line-height:38px;text-align:center;color:#666">1198</div>
<div class="cell" style="left:81px;top:313px;width:90px;height:37px;line-height:38px;text-align:center;color:#3a9a72"><i class="bl"></i>进行中<i class="br"></i></div>
<div class="cell" style="left:172px;top:313px;width:100px;height:37px;line-height:38px;text-align:center;color:#666">工程项目</div>
<div class="cell" style="left:273px;top:313px;width:319px;height:37px;line-height:38px;text-align:left;padding-left:6px;color:#666">水利水电工程项目</div>
<div class="cell" style="left:593px;top:313px;width:79px;height:37px;line-height:38px;text-align:center;color:#666">姒玄英</div>
<div class="cell" style="left:673px;top:313px;width:180px;height:37px;line-height:38px;text-align:center;color:#666">2025-05-01 至 2025-10-31</div>
<div class="cell" style="left:854px;top:313px;width:180px;height:37px;line-height:38px;text-align:center;color:#666">立项阶段『屈世途』</div>
<div class="cell" style="left:1035px;top:313px;width:90px;height:37px;line-height:38px;text-align:center;color:#8dbf7e">1</div>
<div class="cell" style="left:1126px;top:313px;width:90px;height:37px;line-height:38px;text-align:center;color:#e6c285">0</div>
<div class="cell" style="left:1217px;top:313px;width:90px;height:37px;line-height:38px;text-align:center;color:#c96d6d">0%</div>
<div class="cell" style="left:1308px;top:313px;width:80px;height:37px;line-height:38px;text-align:center;color:#666">素还真</div>
<div class="cell" style="left:1389px;top:313px;width:150px;height:37px;line-height:38px;text-align:center;color:#666">2025-06-19 11:45:50</div>
<div class="btns" style="left:1550px;top:322px;width:101px"><span class="b1" style="left:0;width:33px">详细</span><span class="b2" style="left:34px;width:33px">编辑</span><span class="b3" style="left:68px;width:33px">删除</span></div>
<div class="hl" style="left:0;top:350px;width:1661px"></div>
<div class="cell" style="left:0px;top:352px;width:80px;height:37px;line-height:38px;text-align:center;color:#666">1197</div>
<div class="cell" style="left:81px;top:352px;width:90px;height:37px;line-height:38px;text-align:center;color:#999"><i class="bl"></i>已关闭<i class="br"></i></div>
<div class="cell" style="left:172px;top:352px;width:100px;height:37px;line-height:38px;text-align:center;color:#666">普通项目</div>
<div class="cell" style="left:273px;top:352px;width:319px;height:37px;line-height:38px;text-align:left;padding-left:6px;color:#666">cs新建项目1731</div>
<div class="cell" style="left:593px;top:352px;width:79px;height:37px;line-height:38px;text-align:center;color:#666">素还真</div>
<div class="cell" style="left:673px;top:352px;width:180px;height:37px;line-height:38px;text-align:center;color:#666">2025-06-17 至 2025-07-17</div>
<div class="cell" style="left:854px;top:352px;width:180px;height:37px;line-height:38px;text-align:center;color:#666">立项阶段『素还真』</div>
<div class="cell" style="left:1035px;top:352px;width:90px;height:37px;line-height:38px;text-align:center;color:#8dbf7e">1</div>
<div class="cell" style="left:1126px;top:352px;width:90px;height:37px;line-height:38px;text-align:center;color:#e6c285">0</div>
<div class="cell" style="left:1217px;top:352px;width:90px;height:37px;line-height:38px;text-align:center;color:#c96d6d">0%</div>
<div class="cell" style="left:1308px;top:352px;width:80px;height:37px;line-height:38px;text-align:center;color:#666">素还真</div>
<div class="cell" style="left:1389px;top:352px;width:150px;height:37px;line-height:38px;text-align:center;color:#666">2025-06-17 17:32:34</div>
<div class="btns" style="left:1550px;top:361px;width:101px"><span class="b1" style="left:0;width:33px">详细</span><span class="b2" style="left:34px;width:33px">编辑</span><span class="b3" style="left:68px;width:33px">删除</span></div>
<div class="hl" style="left:0;top:389px;width:1661px"></div>
<div class="cell" style="left:0px;top:391px;width:80px;height:37px;line-height:38px;text-align:center;color:#666">1196</div>
<div class="cell" style="left:81px;top:391px;width:90px;height:37px;line-height:38px;text-align:center;color:#cc6c4c"><i class="bl"></i>已完成<i class="br"></i></div>
<div class="cell" style="left:172px;top:391px;width:100px;height:37px;line-height:38px;text-align:center;color:#666">普通项目</div>
<div class="cell" style="left:273px;top:391px;width:319px;height:37px;line-height:38px;text-align:left;padding-left:6px;color:#666">cs新建项目1730</div>
<div class="cell" style="left:593px;top:391px;width:79px;height:37px;line-height:38px;text-align:center;color:#666">素还真</div>
<div class="cell" style="left:673px;top:391px;width:180px;height:37px;line-height:38px;text-align:center;color:#666">2025-06-17 至 2025-07-18</div>
<div class="cell" style="left:854px;top:391px;width:180px;height:37px;line-height:38px;text-align:center;color:#666">-</div>
<div class="cell" style="left:1035px;top:391px;width:90px;height:37px;line-height:38px;text-align:center;color:#8dbf7e">1</div>
<div class="cell" style="left:1126px;top:391px;width:90px;height:37px;line-height:38px;text-align:center;color:#e6c285">0</div>
<div class="cell" style="left:1217px;top:391px;width:90px;height:37px;line-height:38px;text-align:center;color:#c96d6d">0%</div>
<div class="cell" style="left:1308px;top:391px;width:80px;height:37px;line-height:38px;text-align:center;color:#666">素还真</div>
<div class="cell" style="left:1389px;top:391px;width:150px;height:37px;line-height:38px;text-align:center;color:#666">2025-06-17 17:31:58</div>
<div class="btns" style="left:1549px;top:400px;width:102px"><span class="b1" style="left:0;width:33px">详细</span><span class="b3" style="left:34px;width:68px">反确认完成</span></div>
<div class="hl" style="left:0;top:428px;width:1661px"></div>
<div class="cell" style="left:0px;top:430px;width:80px;height:37px;line-height:38px;text-align:center;color:#666">1195</div>
<div class="cell" style="left:81px;top:430px;width:90px;height:37px;line-height:38px;text-align:center;color:#cc6c4c"><i class="bl"></i>已完成<i class="br"></i></div>
<div class="cell" style="left:172px;top:430px;width:100px;height:37px;line-height:38px;text-align:center;color:#666">普通项目</div>
<div class="cell" style="left:273px;top:430px;width:319px;height:37px;line-height:38px;text-align:left;padding-left:6px;color:#666">cs新建项目0617</div>
<div class="cell" style="left:593px;top:430px;width:79px;height:37px;line-height:38px;text-align:center;color:#666">素还真</div>
<div class="cell" style="left:673px;top:430px;width:180px;height:37px;line-height:38px;text-align:center;color:#666">2025-06-17 至 2025-07-17</div>
<div class="cell" style="left:854px;top:430px;width:180px;height:37px;line-height:38px;text-align:center;color:#666">-</div>
<div class="cell" style="left:1035px;top:430px;width:90px;height:37px;line-height:38px;text-align:center;color:#8dbf7e">0</div>
<div class="cell" style="left:1126px;top:430px;width:90px;height:37px;line-height:38px;text-align:center;color:#e6c285">1</div>
<div class="cell" style="left:1217px;top:430px;width:90px;height:37px;line-height:38px;text-align:center;color:#c96d6d">100%</div>
<div class="cell" style="left:1308px;top:430px;width:80px;height:37px;line-height:38px;text-align:center;color:#666">素还真</div>
<div class="cell" style="left:1389px;top:430px;width:150px;height:37px;line-height:38px;text-align:center;color:#666">2025-06-17 16:28:44</div>
<div class="btns" style="left:1549px;top:439px;width:102px"><span class="b1" style="left:0;width:33px">详细</span><span class="b3" style="left:34px;width:68px">反确认完成</span></div>
<div class="hl" style="left:0;top:467px;width:1661px"></div>
<div class="cell" style="left:0px;top:469px;width:80px;height:37px;line-height:38px;text-align:center;color:#666">1191</div>
<div class="cell" style="left:81px;top:469px;width:90px;height:37px;line-height:38px;text-align:center;color:#999"><i class="bl"></i>已关闭<i class="br"></i></div>
<div class="cell" style="left:172px;top:469px;width:100px;height:37px;line-height:38px;text-align:center;color:#666">工程项目</div>
<div class="cell" style="left:273px;top:469px;width:319px;height:37px;line-height:38px;text-align:left;padding-left:6px;color:#666">教学路</div>
<div class="cell" style="left:593px;top:469px;width:79px;height:37px;line-height:38px;text-align:center;color:#666">叶小钗</div>
<div class="cell" style="left:673px;top:469px;width:180px;height:37px;line-height:38px;text-align:center;color:#666">2018-06-08 至 2026-07-16</div>
<div class="cell" style="left:854px;top:469px;width:180px;height:37px;line-height:38px;text-align:center;color:#666">立项阶段『白无垢』</div>
<div class="cell" style="left:1035px;top:469px;width:90px;height:37px;line-height:38px;text-align:center;color:#8dbf7e">2</div>
<div class="cell" style="left:1126px;top:469px;width:90px;height:37px;line-height:38px;text-align:center;color:#e6c285">2</div>
<div class="cell" style="left:1217px;top:469px;width:90px;height:37px;line-height:38px;text-align:center;color:#c96d6d">50%</div>
<div class="cell" style="left:1308px;top:469px;width:80px;height:37px;line-height:38px;text-align:center;color:#666">素还真</div>
<div class="cell" style="left:1389px;top:469px;width:150px;height:37px;line-height:38px;text-align:center;color:#666">2025-06-03 16:31:54</div>
<div class="btns" style="left:1550px;top:478px;width:101px"><span class="b1" style="left:0;width:33px">详细</span><span class="b2" style="left:34px;width:33px">编辑</span><span class="b3" style="left:68px;width:33px">删除</span></div>
<div class="hl" style="left:0;top:506px;width:1661px"></div>
<div class="cell" style="left:0px;top:508px;width:80px;height:37px;line-height:38px;text-align:center;color:#666">1190</div>
<div class="cell" style="left:81px;top:508px;width:90px;height:37px;line-height:38px;text-align:center;color:#3a9a72"><i class="bl"></i>进行中<i class="br"></i></div>
<div class="cell" style="left:172px;top:508px;width:100px;height:37px;line-height:38px;text-align:center;color:#666">普通项目</div>
<div class="cell" style="left:273px;top:508px;width:319px;height:37px;line-height:38px;text-align:left;padding-left:6px;color:#666">11</div>
<div class="cell" style="left:593px;top:508px;width:79px;height:37px;line-height:38px;text-align:center;color:#666">白无垢</div>
<div class="cell" style="left:673px;top:508px;width:180px;height:37px;line-height:38px;text-align:center;color:#666">2025-06-03 至 2025-07-03</div>
<div class="cell" style="left:854px;top:508px;width:180px;height:37px;line-height:38px;text-align:center;color:#666">立项阶段『秋分』</div>
<div class="cell" style="left:1035px;top:508px;width:90px;height:37px;line-height:38px;text-align:center;color:#8dbf7e">0</div>
<div class="cell" style="left:1126px;top:508px;width:90px;height:37px;line-height:38px;text-align:center;color:#e6c285">2</div>
<div class="cell" style="left:1217px;top:508px;width:90px;height:37px;line-height:38px;text-align:center;color:#c96d6d">100%</div>
<div class="cell" style="left:1308px;top:508px;width:80px;height:37px;line-height:38px;text-align:center;color:#666">素还真</div>
<div class="cell" style="left:1389px;top:508px;width:150px;height:37px;line-height:38px;text-align:center;color:#666">2025-06-03 08:52:54</div>
<div class="btns" style="left:1550px;top:517px;width:101px"><span class="b1" style="left:0;width:33px">详细</span><span class="b2" style="left:34px;width:33px">编辑</span><span class="b3" style="left:68px;width:33px">删除</span></div>
<div class="hl" style="left:0;top:545px;width:1661px"></div>
<div class="cell" style="left:0px;top:547px;width:80px;height:37px;line-height:38px;text-align:center;color:#666">1188</div>
<div class="cell" style="left:81px;top:547px;width:90px;height:37px;line-height:38px;text-align:center;color:#cc6c4c"><i class="bl"></i>已完成<i class="br"></i></div>
<div class="cell" style="left:172px;top:547px;width:100px;height:37px;line-height:38px;text-align:center;color:#666">工程项目</div>
<div class="cell" style="left:273px;top:547px;width:319px;height:37px;line-height:38px;text-align:left;padding-left:6px;color:#666">FCC测试项目</div>
<div class="cell" style="left:593px;top:547px;width:79px;height:37px;line-height:38px;text-align:center;color:#666">素还真</div>
<div class="cell" style="left:673px;top:547px;width:180px;height:37px;line-height:38px;text-align:center;color:#666">2025-05-13 至 2026-06-26</div>
<div class="cell" style="left:854px;top:547px;width:180px;height:37px;line-height:38px;text-align:center;color:#666">-</div>
<div class="cell" style="left:1035px;top:547px;width:90px;height:37px;line-height:38px;text-align:center;color:#8dbf7e">1</div>
<div class="cell" style="left:1126px;top:547px;width:90px;height:37px;line-height:38px;text-align:center;color:#e6c285">2</div>
<div class="cell" style="left:1217px;top:547px;width:90px;height:37px;line-height:38px;text-align:center;color:#c96d6d">66.67%</div>
<div class="cell" style="left:1308px;top:547px;width:80px;height:37px;line-height:38px;text-align:center;color:#666">素还真</div>
<div class="cell" style="left:1389px;top:547px;width:150px;height:37px;line-height:38px;text-align:center;color:#666">2025-05-30 11:26:30</div>
<div class="btns" style="left:1549px;top:556px;width:102px"><span class="b1" style="left:0;width:33px">详细</span><span class="b3" style="left:34px;width:68px">反确认完成</span></div>
<div class="hl" style="left:0;top:584px;width:1661px"></div>
</div>
<div class="vl" style="left:273px;top:215px;height:615px"></div>
<div class="vl" style="left:364px;top:215px;height:615px"></div>
<div class="vl" style="left:465px;top:215px;height:615px"></div>
<div class="vl" style="left:785px;top:215px;height:615px"></div>
<div class="vl" style="left:865px;top:215px;height:615px"></div>
<div class="vl" style="left:1046px;top:215px;height:615px"></div>
<div class="vl" style="left:1227px;top:215px;height:615px"></div>
<div class="vl" style="left:1318px;top:215px;height:615px"></div>
<div class="vl" style="left:1409px;top:215px;height:615px"></div>
<div class="vl" style="left:1500px;top:215px;height:615px"></div>
<div class="vl" style="left:1581px;top:215px;height:615px"></div>
<div class="vl" style="left:1732px;top:215px;height:615px"></div>
<div class="vl" style="left:1853px;top:215px;height:615px"></div>
<div class="a" style="left:1856px;top:257px;width:8px;height:420px;border-radius:4px;background:#d9d9d9"></div>
<div class="hl" style="left:193px;top:830px;width:1672px"></div>
<svg class="a" style="left:214px;top:846px" width="9" height="12" viewBox="0 0 9 12" fill="none" stroke="#c2c2c2" stroke-width="1.4"><path d="M7.5 1L2 6l5.5 5"/></svg>
<div class="a" style="left:237px;top:839px;width:31px;height:26px;background:#16baaa;border-radius:2px;color:#fff;font-size:12px;font-weight:bold;line-height:26px;text-align:center">1</div>
<div class="a nw" style="left:279px;top:839px;font-size:12px;line-height:26px;color:#333">2</div>
<div class="a nw" style="left:308px;top:839px;font-size:12px;line-height:26px;color:#333">3</div>
<div class="a nw" style="left:326px;top:839px;font-size:12px;line-height:26px;color:#333">...</div>
<div class="a nw" style="left:345px;top:839px;font-size:12px;line-height:26px;color:#333">7</div>
<svg class="a" style="left:380px;top:846px" width="9" height="12" viewBox="0 0 9 12" fill="none" stroke="#333" stroke-width="1.4"><path d="M1.5 1L7 6l-5.5 5"/></svg>
<div class="a nw" style="left:404px;top:839px;font-size:12px;line-height:26px;color:#999">到第</div>
<div class="a" style="left:438px;top:839px;width:40px;height:26px;border:1px solid #eee;border-radius:2px;font-size:12px;line-height:24px;text-align:center;color:#333">1</div>
<div class="a nw" style="left:488px;top:839px;font-size:12px;line-height:26px;color:#999">页</div>
<div class="a" style="left:510px;top:839px;width:46px;height:26px;border:1px solid #eee;border-radius:2px;font-size:12px;line-height:24px;text-align:center;color:#222">确定</div>
<div class="a nw" style="left:566px;top:839px;font-size:12px;line-height:26px;color:#555">共 136 条</div>
<div class="a" style="left:626px;top:839px;width:75px;height:26px;border:1px solid #eee;border-radius:2px"></div>
<div class="a nw" style="left:634px;top:839px;font-size:12px;line-height:26px;color:#222">20 条/页</div>
<svg class="a" style="left:686px;top:848px" width="10" height="7" viewBox="0 0 10 7" fill="none" stroke="#111" stroke-width="2"><path d="M1 1l4 4 4-4"/></svg>
<div class="a" style="left:1861px;top:351px;width:17px;height:46px;background:#0c0c0c;border-radius:4px 0 0 4px;border-right:2px solid #444"></div>
<div class="a" style="left:1867px;top:357px;width:4px;height:15px;background:repeating-linear-gradient(to bottom,#bbb 0,#bbb 1px,transparent 1px,transparent 2px)"></div>
<div class="a" style="left:1867px;top:376px;width:4px;height:15px;background:repeating-linear-gradient(to bottom,#bbb 0,#bbb 1px,transparent 1px,transparent 2px)"></div>
<div class="a" style="left:180px;top:0;width:2px;height:914px;background:rgba(190,205,245,.3)"></div>
<div class="a" style="left:1732px;top:874px;width:1px;height:40px;background:#eee"></div>
<div class="a" style="left:1853px;top:874px;width:1px;height:40px;background:#eee"></div>
<div class="a" style="left:1733px;top:874px;width:120px;height:40px;background:#fafafa"></div>
<svg class="a" style="left:180px;top:91px;pointer-events:none" width="1698" height="823"><defs><pattern id="wm" patternUnits="userSpaceOnUse" x="250" y="49" width="300" height="200"><g fill="rgba(0,0,0,0.055)" font-family="Liberation Sans" font-size="14" font-weight="bold"><text x="10" y="32" transform="rotate(14 10 32)">素还真 1401</text><text x="171" y="123" transform="rotate(14 171 123)">素还真 1401</text></g></pattern></defs><rect width="1698" height="823" fill="url(#wm)"/></svg>
<div class="a" style="left:1405px;top:831px;width:473px;height:83px;background:linear-gradient(to right,rgba(255,255,255,0),rgba(255,255,255,.75) 35%,rgba(255,255,255,.75))"></div>
<div class="a" style="left:1743px;top:851px;width:33px;height:20px;background:#dff3ff"></div>
<div class="a" style="left:1776px;top:851px;width:34px;height:20px;background:#ffeee5"></div>
<div class="a" style="left:1810px;top:851px;width:34px;height:20px;background:#ffe6da"></div>
<div class="a" style="left:1743px;top:890px;width:33px;height:24px;background:#eaf7ff"></div>
<div class="a" style="left:1777px;top:890px;width:33px;height:24px;background:#eaf9f3"></div>
<div class="a" style="left:1811px;top:890px;width:33px;height:24px;background:#fff0ea"></div></body></html>
